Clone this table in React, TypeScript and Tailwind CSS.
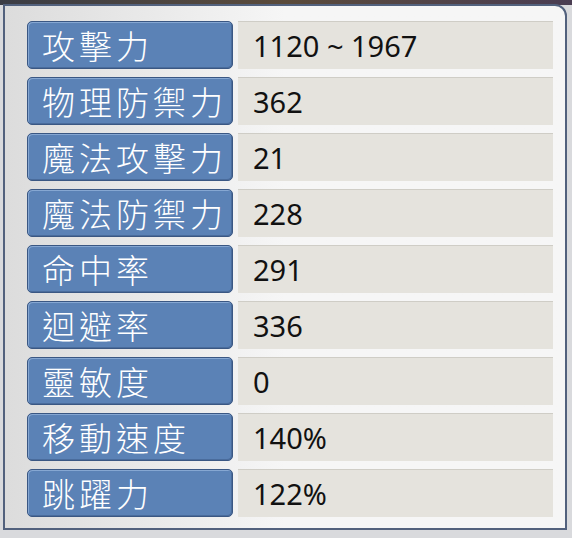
const stats = [
  { label: '攻擊力', value: '1120 ~ 1967' },
  { label: '物理防禦力', value: '362' },
  { label: '魔法攻擊力', value: '21' },
  { label: '魔法防禦力', value: '228' },
  { label: '命中率', value: '291' },
  { label: '迴避率', value: '336' },
  { label: '靈敏度', value: '0' },
  { label: '移動速度', value: '140%' },
  { label: '跳躍力', value: '122%' },
];

function StatRow({ label, value }: { label: string; value: string }) {
  return (
    <div className="flex h-[48px] items-stretch gap-[5px]">
      <div className="flex w-[206px] items-center rounded-[5px] border border-[#3a5783] bg-[#5b82b6] pl-[14px] shadow-[inset_1px_1px_0_#86a7d2,inset_-1px_-1px_0_#4a6c9c]">
        <span
          className="text-[33px] font-light leading-none tracking-[4px] text-white"
          style={{ fontFamily: '"Noto Sans CJK TC", sans-serif' }}
        >
          {label}
        </span>
      </div>
      <div className="flex w-[315px] items-center bg-[#e5e3dd] pl-[15px] shadow-[inset_0_1px_0_#cfcdc6]">
        <span
          className="text-[29px] leading-none text-[#111]"
          style={{ fontFamily: '"Noto Sans", sans-serif' }}
        >
          {value}
        </span>
      </div>
    </div>
  );
}

export default function App() {
  return (
    <div className="relative h-[538px] w-[572px] overflow-hidden bg-[#d9dadd]">
      <div className="h-[5px] bg-gradient-to-r from-[#3b3d45] via-[#5a4a3a] to-[#4a3d52]" />
      <div className="absolute left-[3px] top-[4px] h-[526px] w-[564px] rounded-tr-[12px] border-2 border-[#52617d] bg-gradient-to-r from-[#dcdcdc] via-[#f6f6f6] to-[#f6f6f6]">
        <div className="flex flex-col gap-[8px] pl-[22px] pt-[15px]">
          {stats.map((s) => (
            <StatRow key={s.label} label={s.label} value={s.value} />
          ))}
        </div>
      </div>
    </div>
  );
}
